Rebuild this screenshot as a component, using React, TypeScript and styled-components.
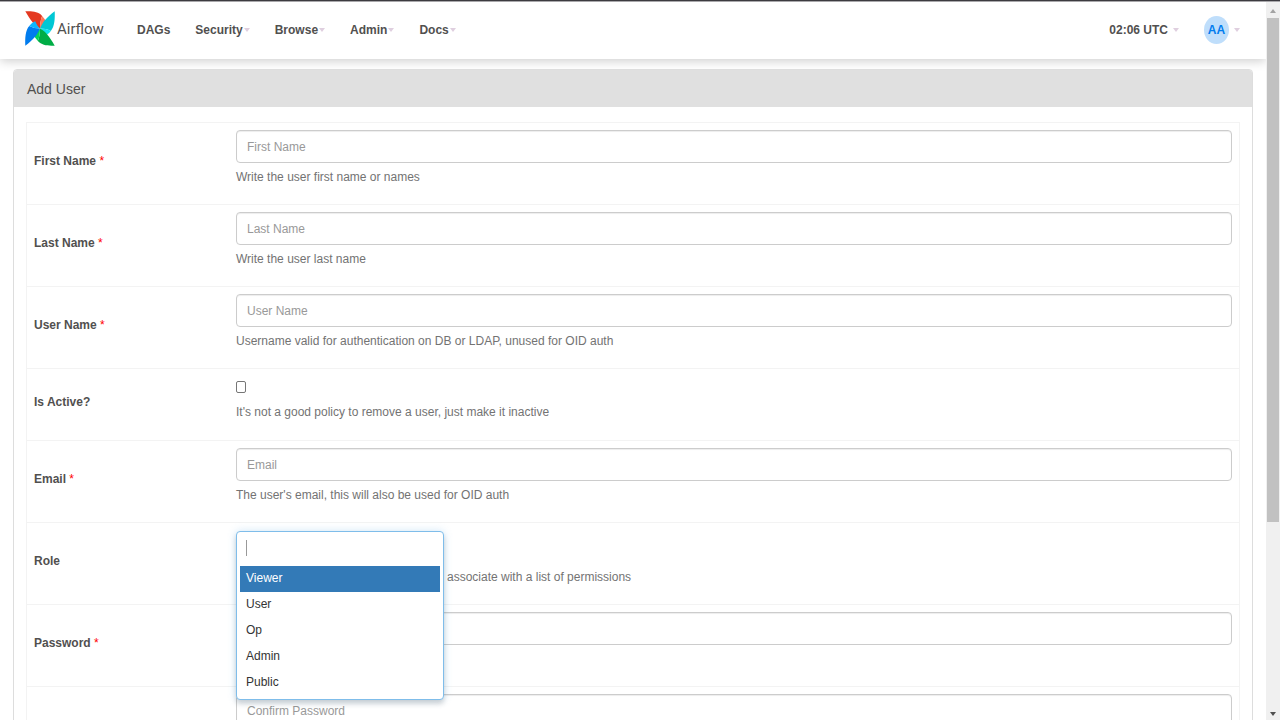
import React from "react";
import styled, { createGlobalStyle, css } from "styled-components";

const GlobalStyle = createGlobalStyle`
  * { box-sizing: border-box; }
  html, body, #root { height: 100%; }
  body {
    margin: 0;
    overflow: hidden;
    background: #fff;
    color: #51504f;
    font-family: "Liberation Sans", Arial, sans-serif;
    font-size: 12px;
    line-height: 20px;
  }
  button, input { font: inherit; color: inherit; }
`;

const Window = styled.div`
  display: grid;
  grid-template-columns: minmax(0, 1fr) 14px;
  height: 100%;
  border-top: 1px solid #3c3b40;
  box-shadow: inset 0 1px 0 #a9a8ab;
`;

const Page = styled.div`
  min-width: 0;
  overflow: hidden;
`;

const Navbar = styled.header`
  display: flex;
  align-items: center;
  height: 58px;
  padding: 0 26px 0 25px;
  box-shadow: 0 2px 10px rgba(0, 0, 0, 0.2);
`;

const Brand = styled.a`
  display: flex;
  align-items: center;
  gap: 2px;
  width: 112px;
  padding-bottom: 3px;
  color: #51504f;
  font-family: Roboto, sans-serif;
  font-size: 15px;
  text-decoration: none;
`;

const NavList = styled.nav`
  display: flex;
  flex: 1;
  gap: 25px;
`;

const navItem = css`
  display: flex;
  align-items: center;
  padding: 0;
  border: 0;
  background: none;
  color: #51504f;
  font-weight: bold;
  text-decoration: none;
`;

const NavLink = styled.a`
  ${navItem}
`;

const NavButton = styled.button<{ $gap?: number }>`
  ${navItem}
  gap: ${(p) => p.$gap ?? 1}px;
`;

const Caret = styled.span`
  border: 3px solid transparent;
  border-top: 4px solid #dfcfdf;
  border-bottom: 0;
`;

const UserTools = styled.div`
  display: flex;
  align-items: center;
  gap: 25px;
`;

const Avatar = styled.span`
  display: grid;
  place-items: center;
  width: 25px;
  height: 28px;
  border-radius: 50%;
  background: #bfdefb;
  color: #017cee;
`;

const Panel = styled.main`
  margin: 10px 13px 0;
  border: 1px solid #ddd;
  border-radius: 4px;
`;

const PanelTitle = styled.h1`
  margin: 0;
  padding: 9px 13px 8px;
  border-radius: 3px 3px 0 0;
  background: #e0e0e0;
  font-size: 14px;
  font-weight: normal;
`;

const Form = styled.form`
  padding: 15px 12px;
`;

const FieldRow = styled.div<{ $height?: number }>`
  display: grid;
  grid-template-columns: 202px minmax(0, 1fr);
  height: ${(p) => p.$height ?? 82}px;
  padding: 7px 7px 0 0;
  border: 1px solid #f3f3f3;
  border-bottom: 0;
`;

const FieldLabel = styled.label`
  align-self: center;
  padding: 0 0 12px 7px;
  font-weight: bold;
`;

const Required = styled.span`
  color: #f00;
  font-weight: normal;
`;

const Field = styled.div`
  position: relative;
  grid-column: 2;
  padding-left: 7px;
`;

const TextInput = styled.input`
  display: block;
  width: 100%;
  height: 33px;
  padding: 0 10px;
  border: 1px solid #ccc;
  border-radius: 4px;
  background: #fff;
  box-shadow: inset 0 1px 1px rgba(0, 0, 0, 0.075);
  outline: none;
  &::placeholder { color: #999; opacity: 1; }
`;

const Checkbox = styled.input`
  display: block;
  width: 10px;
  height: 12px;
  margin: 5px 0 9px;
  border: 1px solid #767676;
  border-radius: 2px;
  appearance: none;
  &:checked { background: #017cee; }
`;

const Help = styled.p`
  margin: 4px 0 0;
  color: #737373;
`;

const RoleHelp = styled(Help)`
  padding: 33px 0 0 211px;
`;

const Picker = styled.div`
  position: absolute;
  z-index: 2;
  top: 1px;
  left: 7px;
  width: 208px;
  padding: 0 3px 3px;
  border: 1px solid #7fbdea;
  border-radius: 4px;
  background: #fff;
  box-shadow: 0 4px 5px rgba(0, 0, 0, 0.15), 0 0 8px rgba(102, 175, 233, 0.3);
`;

const SearchBox = styled.div`
  display: flex;
  align-items: center;
  height: 34px;
  padding: 0 6px 2px;
`;

const TextCursor = styled.span`
  width: 1px;
  height: 16px;
  background: #999;
`;

const SearchInput = styled.input`
  flex: 1;
  min-width: 0;
  border: 0;
  outline: none;
  background: none;
`;

const Options = styled.ul`
  margin: 0;
  padding: 0;
  list-style: none;
`;

const Option = styled.li<{ $active: boolean }>`
  height: 26px;
  padding: 2px 6px;
  background: ${(p) => (p.$active ? "#337ab7" : "#fff")};
  color: ${(p) => (p.$active ? "#fff" : "#333")};
`;

const Scrollbar = styled.div`
  display: flex;
  flex-direction: column;
  align-items: center;
  margin-top: 1px;
  padding: 7px 0 4px;
  background: #f0f0f0;
`;

const ScrollArrow = styled.span<{ $down?: boolean }>`
  border: 3px solid transparent;
  ${(p) =>
    p.$down
      ? "border-top: 4px solid #505050; border-bottom: 0;"
      : "border-bottom: 4px solid #a3a3a3; border-top: 0;"}
`;

const ScrollTrack = styled.div`
  flex: 1;
  width: 12px;
  margin: 5px 0 4px;
`;

const ScrollThumb = styled.div`
  height: 73%;
  background: #c1c1c1;
`;

const blades = [
  { turn: 0, fill: "#e43921", fold: "#ff7557" },
  { turn: 90, fill: "#00c7d4", fold: "#11e1ee" },
  { turn: 180, fill: "#00ad46", fold: "#04d659" },
  { turn: 270, fill: "#017cee", fold: "#0cb6ff" },
];

function Pinwheel() {
  return (
    <svg width="30" height="35" viewBox="0 0 100 100" preserveAspectRatio="none" aria-hidden="true">
      {blades.map(({ turn, fill, fold }) => (
        <g key={turn} transform={`rotate(${turn} 50 50)`}>
          <path fill={fill} d="M1 1C22 0 44 1 57 14C52 25 50 38 50 50C36 42 30 38 26 33C17 24 9 13 1 1Z" />
          <path fill={fold} d="M57 14C64 20 69 27 71 34C63 38 55 43 50 50C50 38 52 25 57 14Z" />
        </g>
      ))}
    </svg>
  );
}

type TextRowProps = {
  id: string;
  label?: string;
  placeholder?: string;
  help?: string;
  type?: string;
};

function TextRow({ id, label, placeholder, help, type = "text" }: TextRowProps) {
  return (
    <FieldRow>
      {label && (
        <FieldLabel htmlFor={id}>
          {label} <Required>*</Required>
        </FieldLabel>
      )}
      <Field>
        <TextInput id={id} type={type} placeholder={placeholder} aria-label={label ? undefined : placeholder} />
        {help && <Help>{help}</Help>}
      </Field>
    </FieldRow>
  );
}

const menus = ["Security", "Browse", "Admin", "Docs"];
const roles = ["Viewer", "User", "Op", "Admin", "Public"];

export default function App() {
  return (
    <>
      <GlobalStyle />
      <Window>
        <Page>
          <Navbar>
            <Brand href="#">
              <Pinwheel />
              Airflow
            </Brand>
            <NavList>
              <NavLink href="#">DAGs</NavLink>
              {menus.map((name) => (
                <NavButton key={name} type="button">
                  {name}
                  <Caret />
                </NavButton>
              ))}
            </NavList>
            <UserTools>
              <NavButton type="button" $gap={5}>
                02:06 UTC
                <Caret />
              </NavButton>
              <NavButton type="button" $gap={5}>
                <Avatar>AA</Avatar>
                <Caret />
              </NavButton>
            </UserTools>
          </Navbar>
          <Panel>
            <PanelTitle>Add User</PanelTitle>
            <Form>
              <TextRow id="first" label="First Name" placeholder="First Name" help="Write the user first name or names" />
              <TextRow id="last" label="Last Name" placeholder="Last Name" help="Write the user last name" />
              <TextRow
                id="username"
                label="User Name"
                placeholder="User Name"
                help="Username valid for authentication on DB or LDAP, unused for OID auth"
              />
              <FieldRow $height={72}>
                <FieldLabel htmlFor="active">Is Active?</FieldLabel>
                <Field>
                  <Checkbox id="active" type="checkbox" />
                  <Help>It's not a good policy to remove a user, just make it inactive</Help>
                </Field>
              </FieldRow>
              <TextRow
                id="email"
                label="Email"
                placeholder="Email"
                help="The user's email, this will also be used for OID auth"
              />
              <FieldRow>
                <FieldLabel htmlFor="role">Role</FieldLabel>
                <Field>
                  <Picker>
                    <SearchBox>
                      <TextCursor />
                      <SearchInput id="role" type="text" />
                    </SearchBox>
                    <Options role="listbox" aria-label="Role">
                      {roles.map((role, i) => (
                        <Option key={role} role="option" aria-selected={i === 0} $active={i === 0}>
                          {role}
                        </Option>
                      ))}
                    </Options>
                  </Picker>
                  <RoleHelp>associate with a list of permissions</RoleHelp>
                </Field>
              </FieldRow>
              <TextRow id="password" label="Password" type="password" />
              <TextRow id="confirm" placeholder="Confirm Password" type="password" />
            </Form>
          </Panel>
        </Page>
        <Scrollbar aria-hidden="true">
          <ScrollArrow />
          <ScrollTrack>
            <ScrollThumb />
          </ScrollTrack>
          <ScrollArrow $down />
        </Scrollbar>
      </Window>
    </>
  );
}
